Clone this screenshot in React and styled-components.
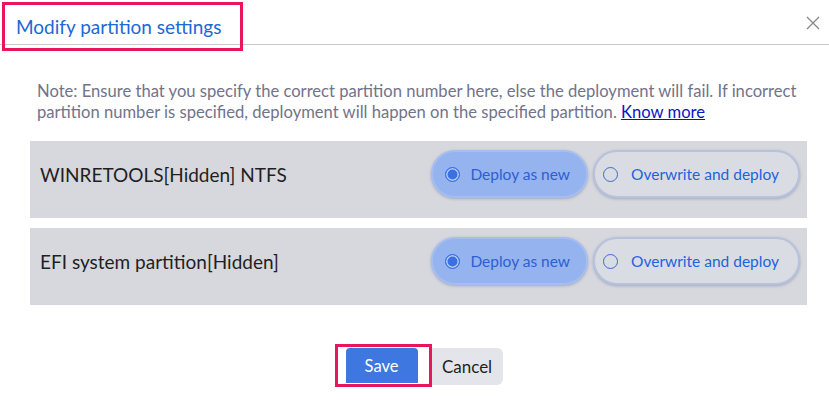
import React from 'react';
import styled, { createGlobalStyle } from 'styled-components';

const GlobalStyle = createGlobalStyle`
  html, body {
    margin: 0;
    padding: 0;
    background: #ffffff;
    font-family: Lato, "Open Sans", sans-serif;
  }
`;

const Dialog = styled.div`
  width: 829px;
  height: 409px;
  background: #ffffff;
  box-sizing: border-box;
`;

const Header = styled.div`
  display: flex;
  align-items: flex-start;
  justify-content: space-between;
  height: 45px;
  padding: 2px 8px 0 2px;
  box-sizing: border-box;
  border-bottom: 1px solid #c9c9cc;
`;

const Highlight = styled.div`
  display: flex;
  align-items: center;
  border: 3px solid #e8175d;
  box-sizing: border-box;
  padding: ${p => p.$padding || '0'};
`;

const Title = styled.h2`
  margin: 0;
  width: 235px;
  height: 43px;
  display: flex;
  align-items: center;
  padding-left: 11px;
  box-sizing: border-box;
  font-size: 19px;
  font-weight: 400;
  color: #1c68d4;
  white-space: nowrap;
`;

const CloseButton = styled.button`
  margin-top: 13px;
  width: 16px;
  height: 16px;
  padding: 0;
  border: none;
  background: transparent;
  display: flex;
  align-items: center;
  justify-content: center;
  cursor: pointer;
`;

const Body = styled.div`
  padding: 36px 22px 0 30px;
`;

const Note = styled.p`
  margin: 0 0 18px;
  padding-left: 7px;
  font-size: 16.6px;
  line-height: 21px;
  color: #72738a;

  a {
    color: #0a14c8;
    text-decoration: underline;
  }
`;

const Rows = styled.div`
  display: flex;
  flex-direction: column;
  gap: 10px;
`;

const Row = styled.div`
  display: flex;
  align-items: center;
  justify-content: space-between;
  height: 77px;
  padding: 9px 7px 20px 10px;
  box-sizing: border-box;
  background: #d7d8dd;
`;

const PartitionName = styled.span`
  font-size: 19px;
  color: #1f1f22;
`;

const Options = styled.div`
  display: flex;
  gap: 5px;
`;

const Pill = styled.label`
  display: flex;
  align-items: center;
  gap: ${p => (p.$selected ? '10px' : '13px')};
  height: 48px;
  padding: ${p => (p.$selected ? '0 16px 0 12px' : '0 19px 0 8px')};
  box-sizing: border-box;
  border-radius: 24px;
  background: ${p => (p.$selected ? '#94b3ef' : '#dadce4')};
  border: 2px solid ${p => (p.$selected ? '#a6bdf0' : '#b8c2dc')};
  box-shadow: 0 1px 3px rgba(60, 80, 140, 0.35);
  font-size: 15.5px;
  color: ${p => (p.$selected ? '#2e5fd0' : '#1d63dc')};
  cursor: pointer;
`;

const Radio = styled.span`
  width: 15px;
  height: 15px;
  border-radius: 50%;
  box-sizing: border-box;
  border: 1px solid ${p => (p.$checked ? '#3a6fe0' : '#3d6bc8')};
  background: ${p => (p.$checked ? '#3a70e2' : 'transparent')};
  box-shadow: ${p => (p.$checked ? 'inset 0 0 0 1.5px #b9cdf5' : 'none')};
  flex: none;
`;

const Footer = styled.div`
  display: flex;
  justify-content: center;
  align-items: flex-start;
  margin-top: 39px;
`;

const SaveButton = styled.button`
  width: 72px;
  height: 35px;
  border: none;
  border-radius: 4px 4px 0 0;
  background: #3f77e0;
  color: #ffffff;
  font-family: inherit;
  font-size: 16.5px;
  cursor: pointer;
`;

const CancelButton = styled.button`
  width: 71px;
  height: 37px;
  margin-top: 4px;
  border: none;
  border-radius: 0 6px 6px 0;
  background: #e4e5ea;
  color: #1f1f22;
  font-family: inherit;
  font-size: 17px;
  cursor: pointer;
`;

const partitions = [
  { id: 1, name: 'WINRETOOLS[Hidden] NTFS' },
  { id: 2, name: 'EFI system partition[Hidden]' },
];

const CloseIcon = () => (
  <svg width="14" height="14" viewBox="0 0 14 14">
    <path d="M1 1 L13 13 M13 1 L1 13" stroke="#8a8a8e" strokeWidth="1.4" />
  </svg>
);

export default function App() {
  return (
    <Dialog>
      <GlobalStyle />
      <Header>
        <Highlight>
          <Title>Modify partition settings</Title>
        </Highlight>
        <CloseButton aria-label="Close">
          <CloseIcon />
        </CloseButton>
      </Header>
      <Body>
        <Note>
          Note: Ensure that you specify the correct partition number here, else the deployment will fail. If incorrect
          partition number is specified, deployment will happen on the specified partition. <a href="#">Know more</a>
        </Note>
        <Rows>
          {partitions.map(p => (
            <Row key={p.id}>
              <PartitionName>{p.name}</PartitionName>
              <Options>
                <Pill $selected>
                  <Radio $checked />
                  Deploy as new
                </Pill>
                <Pill>
                  <Radio />
                  Overwrite and deploy
                </Pill>
              </Options>
            </Row>
          ))}
        </Rows>
        <Footer>
          <Highlight $padding="1px 11px 1px 8px">
            <SaveButton>Save</SaveButton>
          </Highlight>
          <CancelButton>Cancel</CancelButton>
        </Footer>
      </Body>
    </Dialog>
  );
}
